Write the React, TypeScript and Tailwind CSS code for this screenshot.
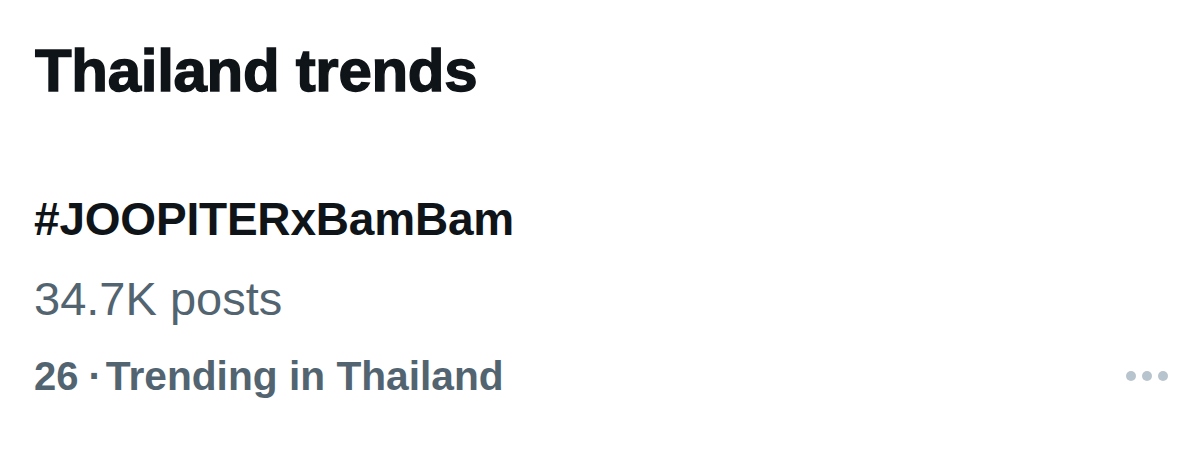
export default function App() {
  return (
    <div className="w-[1200px] h-[450px] bg-white overflow-hidden pt-[41px] pl-[34px] pr-[32px] font-['Liberation_Sans',Arial,sans-serif]">
      <h1 className="pl-[1px] text-[60px] leading-[60px] font-bold text-[#0f1419] tracking-[-0.3px] [-webkit-text-stroke:1.4px_#0f1419]">
        Thailand trends
      </h1>
      <div className="mt-[95px] text-[46px] leading-[46px] font-bold text-[#0f1419] tracking-[-0.2px]">
        #JOOPITERxBamBam
      </div>
      <div className="mt-[34px] text-[47px] leading-[46px] text-[#536471]">
        34.7K posts
      </div>
      <div className="mt-[34px] flex items-center justify-between">
        <div className="flex items-baseline text-[40px] leading-[40px] font-bold text-[#536471]">
          <span>26</span>
          <span className="ml-[10px] mr-[4px]">·</span>
          <span className="text-[40.7px]">Trending in Thailand</span>
        </div>
        <div className="flex items-center gap-[6px]">
          <span className="w-[10px] h-[10px] rounded-full bg-[#b8c4cd]"></span>
          <span className="w-[10px] h-[10px] rounded-full bg-[#b8c4cd]"></span>
          <span className="w-[10px] h-[10px] rounded-full bg-[#b8c4cd]"></span>
        </div>
      </div>
    </div>
  );
}
